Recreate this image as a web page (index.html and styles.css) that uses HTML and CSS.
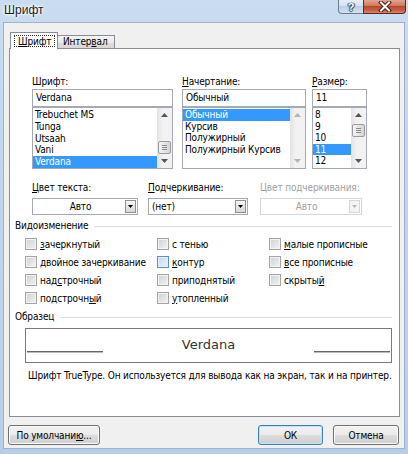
FILE: index.html
```html
<!DOCTYPE html>
<html lang="ru">
<head>
<meta charset="utf-8">
<title>Шрифт</title>
<link rel="stylesheet" href="styles.css">
</head>
<body>
<div class="window">
  <div class="titlebar">
    <span class="title">Шрифт</span>
    <div class="caption-btns">
      <div class="cbtn help"><span class="qmark">?</span></div>
      <div class="cbtn close">
        <svg width="14" height="11" viewBox="0 0 14 11">
          <path d="M3 1.5 L11 9.5 M11 1.5 L3 9.5" stroke="#4a2018" stroke-width="4" stroke-linecap="square" fill="none"/>
          <path d="M3 1.5 L11 9.5 M11 1.5 L3 9.5" stroke="#ffffff" stroke-width="2" stroke-linecap="square" fill="none"/>
        </svg>
      </div>
    </div>
  </div>
  <div class="client">
    <div class="tabs">
      <div class="tab active"><span class="focus"><u>Ш</u>рифт</span></div>
      <div class="tab">Интер<u>в</u>ал</div>
    </div>
    <div class="panel">
      <div class="fontgrid">
        <div class="field f-font">
          <div class="lbl">Шрифт:</div>
          <div class="input">Verdana</div>
          <div class="list">
            <div class="items">
              <div class="item font-item">Trebuchet MS</div>
              <div class="item font-item">Tunga</div>
              <div class="item font-item">Utsaah</div>
              <div class="item font-item">Vani</div>
              <div class="item font-item sel">Verdana</div>
            </div>
            <div class="sbar">
              <div class="arrow"><svg width="7" height="4" viewBox="0 0 7 4"><path d="M0 4 L3.5 0 L7 4 Z" fill="#555"/></svg></div>
              <div class="track"></div>
              <div class="thumb"><i></i><i></i><i></i></div>
              <div class="arrow"><svg width="7" height="4" viewBox="0 0 7 4"><path d="M0 0 L7 0 L3.5 4 Z" fill="#555"/></svg></div>
            </div>
          </div>
        </div>
        <div class="field f-style">
          <div class="lbl"><u>Н</u>ачертание:</div>
          <div class="input">Обычный</div>
          <div class="list">
            <div class="items">
              <div class="item sel">Обычный</div>
              <div class="item">Курсив</div>
              <div class="item">Полужирный</div>
              <div class="item">Полужирный Курсив</div>
            </div>
            <div class="sbar">
              <div class="arrow"><svg width="7" height="4" viewBox="0 0 7 4"><path d="M0 4 L3.5 0 L7 4 Z" fill="#b4b4b4"/></svg></div>
              <div class="track"></div>
              <div class="arrow"><svg width="7" height="4" viewBox="0 0 7 4"><path d="M0 0 L7 0 L3.5 4 Z" fill="#b4b4b4"/></svg></div>
            </div>
          </div>
        </div>
        <div class="field f-size">
          <div class="lbl"><u>Р</u>азмер:</div>
          <div class="input">11</div>
          <div class="list">
            <div class="items">
              <div class="item">8</div>
              <div class="item">9</div>
              <div class="item">10</div>
              <div class="item sel">11</div>
              <div class="item">12</div>
            </div>
            <div class="sbar">
              <div class="arrow"><svg width="7" height="4" viewBox="0 0 7 4"><path d="M0 4 L3.5 0 L7 4 Z" fill="#555"/></svg></div>
              <div class="thumb top"><i></i><i></i><i></i></div>
              <div class="track"></div>
              <div class="arrow"><svg width="7" height="4" viewBox="0 0 7 4"><path d="M0 0 L7 0 L3.5 4 Z" fill="#555"/></svg></div>
            </div>
          </div>
        </div>
      </div>

      <div class="combos">
        <div class="combo c1">
          <div class="lbl"><u>Ц</u>вет текста:</div>
          <div class="dropdown">
            <span class="dd-text center">Авто</span>
            <span class="dd-btn"><svg width="5" height="3" viewBox="0 0 5 3"><path d="M0 0 L5 0 L2.5 3 Z" fill="#000"/></svg></span>
          </div>
        </div>
        <div class="combo c2">
          <div class="lbl"><u>П</u>одчеркивание:</div>
          <div class="dropdown">
            <span class="dd-text">(нет)</span>
            <span class="dd-btn"><svg width="5" height="3" viewBox="0 0 5 3"><path d="M0 0 L5 0 L2.5 3 Z" fill="#000"/></svg></span>
          </div>
        </div>
        <div class="combo c3 disabled">
          <div class="lbl">Цвет подчеркивания:</div>
          <div class="dropdown">
            <span class="dd-text center">Авто</span>
            <span class="dd-btn"><svg width="5" height="3" viewBox="0 0 5 3"><path d="M0 0 L5 0 L2.5 3 Z" fill="#b8b8b8"/></svg></span>
          </div>
        </div>
      </div>

      <div class="group-title"><span>Видоизменение</span></div>
      <div class="checks">
        <label class="chk"><span class="box"></span><span><u>з</u>ачеркнутый</span></label>
        <label class="chk"><span class="box"></span><span>двойное зачеркивание</span></label>
        <label class="chk"><span class="box"></span><span>над<u>с</u>трочный</span></label>
        <label class="chk"><span class="box"></span><span>подстрочн<u>ы</u>й</span></label>
        <label class="chk"><span class="box"></span><span>с тенью</span></label>
        <label class="chk"><span class="box hover"></span><span><u>к</u>онтур</span></label>
        <label class="chk"><span class="box"></span><span>приподнятый</span></label>
        <label class="chk"><span class="box"></span><span><u>у</u>топленный</span></label>
        <label class="chk"><span class="box"></span><span><u>м</u>алые прописные</span></label>
        <label class="chk"><span class="box"></span><span><u>в</u>се прописные</span></label>
        <label class="chk"><span class="box"></span><span>скрыты<u>й</u></span></label>
      </div>

      <div class="group-title sample-title"><span>Образец</span></div>
      <div class="preview">
        <span class="pline"></span>
        <span class="ptext">Verdana</span>
        <span class="pline"></span>
      </div>
      <div class="desc">Шрифт TrueType. Он используется для вывода как на экран, так и на принтер.</div>
    </div>

    <div class="buttons">
      <button class="btn b-default">По умолчани<u>ю</u>...</button>
      <span class="spacer"></span>
      <button class="btn b-ok">ОК</button>
      <button class="btn b-cancel">Отмена</button>
    </div>
  </div>
</div>
</body>
</html>
```

FILE: styles.css
```css
* { box-sizing: border-box; }

html, body {
  margin: 0;
  padding: 0;
}

body {
  width: 408px;
  height: 454px;
  overflow: hidden;
  font-family: "DejaVu Sans Condensed", "DejaVu Sans", sans-serif;
  font-stretch: condensed;
  font-size: 10px;
  letter-spacing: -0.15px;
  color: #000;
  background: #bfd4ec;
}

u { text-decoration: underline; text-underline-offset: 1px; }

.window {
  width: 408px;
  height: 454px;
  display: flex;
  flex-direction: column;
  background: linear-gradient(180deg, #cadcf1 0%, #c2d7ee 30%, #b7cee8 100%);
}

/* title bar */
.titlebar {
  flex: none;
  height: 22px;
  display: flex;
  justify-content: space-between;
  align-items: flex-start;
  padding: 0 2px 0 4px;
}

.title {
  font-family: "Liberation Sans", sans-serif;
  font-size: 12px;
  letter-spacing: 0;
  line-height: 21px;
  color: #1b1b1b;
  text-shadow: 0 0 5px #fff, 0 0 3px #fff, 0 0 2px #fff;
}

.caption-btns {
  display: flex;
}

.cbtn {
  height: 14px;
  display: flex;
  align-items: center;
  justify-content: center;
  border: 1px solid #6d7d91;
  border-top: none;
}

.help {
  width: 25px;
  border-right: none;
  border-radius: 0 0 0 4px;
  background: linear-gradient(180deg, #e6eef8 0%, #d3e1f0 45%, #bccfe5 50%, #d2e2f3 100%);
}

.qmark {
  font-family: "Liberation Sans", sans-serif;
  font-weight: bold;
  font-size: 11px;
  line-height: 12px;
  color: #fff;
  text-shadow: 0 0 1px #2c3c50, 1px 0 1px #2c3c50, -1px 0 1px #2c3c50, 0 1px 1px #2c3c50;
}

.close {
  width: 43px;
  border-color: #5a2a20;
  border-radius: 0 0 4px 0;
  background: linear-gradient(180deg, #e0a594 0%, #cf7b63 42%, #b8492f 50%, #c86145 80%, #d9876a 100%);
}

/* client area */
.client {
  flex: none;
  height: 427px;
  margin: 0 3px;
  background: #f0f0f0;
  border: 1px solid #9fb2ca;
  padding: 9px 4px 3px 4px;
  display: flex;
  flex-direction: column;
}

.tabs {
  height: 17px;
  display: flex;
  align-items: flex-end;
  padding-left: 2px;
}

.tab {
  height: 14px;
  width: 57px;
  border: 1px solid #898c95;
  border-bottom: none;
  border-left: none;
  background: linear-gradient(180deg, #f3f3f3 0%, #ebebeb 50%, #dddddd 51%, #d7d7d7 100%);
  line-height: 12px;
  padding-left: 5px;
  color: #000;
}

.tab.active {
  position: relative;
  z-index: 1;
  width: 48px;
  height: 17px;
  border-left: 1px solid #898c95;
  background: #fff;
  padding: 2px 2px 0 3px;
}

.focus {
  display: block;
  height: 12px;
  line-height: 11px;
  border: 1px dotted #333;
  padding-left: 3px;
}

.panel {
  height: 369px;
  margin: -1px 0 0 1px;
  border: 1px solid #898c95;
  background: #fff;
  padding: 26px 7px 0 5px;
  display: flex;
  flex-direction: column;
}

/* font / style / size */
.fontgrid {
  display: flex;
  padding-left: 17px;
}

.f-font { width: 141px; }
.f-style { width: 124px; margin-left: 9px; }
.f-size { width: 55px; margin-left: 6px; }

.lbl {
  height: 14px;
  line-height: 13px;
  white-space: nowrap;
}

.input {
  height: 18px;
  border: 1px solid #a5a9b1;
  padding-left: 3px;
  line-height: 16px;
}

.list {
  height: 62px;
  border: 1px solid #a5a9b1;
  display: flex;
  overflow: hidden;
}

.items {
  flex: 1;
  min-width: 0;
  padding-top: 1px;
  overflow: hidden;
}

.item {
  height: 11.6px;
  line-height: 11.6px;
  padding-left: 2px;
  white-space: nowrap;
}

.item.font-item {
  height: 11.8px;
  line-height: 11.8px;
}

.item.sel {
  background: #3399ff;
  color: #fff;
}

.sbar {
  width: 15px;
  flex: none;
  display: flex;
  flex-direction: column;
  background: linear-gradient(90deg, #e3e3e6 0%, #f2f2f3 40%, #f2f2f3 100%);
}

.arrow {
  height: 14px;
  flex: none;
  display: flex;
  align-items: center;
  justify-content: center;
}

.track { flex: 1; }

.thumb {
  height: 13px;
  flex: none;
  margin: 0 1px;
  border: 1px solid #999ba0;
  border-radius: 2px;
  background: linear-gradient(90deg, #f4f4f4 0%, #e6e6e6 50%, #d4d4d4 100%);
  display: flex;
  flex-direction: column;
  justify-content: center;
  align-items: center;
  gap: 1px;
}

.thumb.top { margin-top: 2px; }

.thumb i {
  display: block;
  width: 5px;
  height: 1px;
  background: #8a8c90;
}

/* combos */
.combos {
  display: flex;
  padding-left: 17px;
  margin-top: 12px;
}

.combo .lbl { height: 17px; }
.c1 { width: 106px; }
.c2 { width: 100px; margin-left: 10px; }
.c3 { width: 102px; margin-left: 12px; }

.dropdown {
  height: 17px;
  border: 1px solid #a5a9b1;
  display: flex;
  align-items: center;
  background: #fff;
}

.dd-text {
  flex: 1;
  padding-left: 3px;
  line-height: 15px;
}

.dd-text.center {
  text-align: center;
}

.dd-btn {
  width: 11px;
  height: 13px;
  margin-right: 1px;
  border: 1px solid #8e9095;
  background: linear-gradient(180deg, #f6f6f6 0%, #e6e6e6 50%, #d6d6d6 100%);
  display: flex;
  align-items: center;
  justify-content: center;
}

.disabled .lbl,
.disabled .dd-text { color: #a0a0a0; }
.disabled .dropdown { border-color: #d3d6db; }
.disabled .dd-btn { border-color: #d3d6db; background: #f4f4f4; }

/* group titles */
.group-title {
  display: flex;
  align-items: center;
  height: 12px;
  line-height: 12px;
  margin-top: 5px;
}

.group-title::after {
  content: "";
  flex: 1;
  margin-left: 6px;
  border-top: 1px solid #d5dfe5;
}

.sample-title { margin-top: 4px; }

/* checkboxes */
.checks {
  display: grid;
  grid-template-columns: 132px 112px 1fr;
  grid-template-rows: repeat(4, 18px);
  grid-auto-flow: column;
  padding-left: 10px;
  margin-top: 3px;
}

.chk {
  display: flex;
  align-items: center;
  white-space: nowrap;
}

.box {
  width: 12px;
  height: 12px;
  margin-right: 3px;
  border: 1px solid #a2a4a7;
  background: linear-gradient(135deg, #cfd1d4 0%, #e2e3e5 55%, #f3f3f3 100%);
  box-shadow: inset 0 0 0 1px #f2f2f2;
  flex: none;
}

.box.hover {
  border-color: #5b8fc7;
  background: linear-gradient(135deg, #b8d6f3 0%, #d8e9f8 55%, #eef5fc 100%);
  box-shadow: inset 0 0 0 1px #e7f1fb;
}

/* sample */
.preview {
  margin: 5px 0 0 10px;
  width: 367px;
  height: 35px;
  border: 1px solid #7a7a7a;
  display: grid;
  grid-template-columns: 76px 1fr 76px;
  align-items: end;
  padding: 0 1px 9px 1px;
}

.pline {
  height: 2px;
  border-top: 1px solid #666;
  border-bottom: 1px solid #bcbcbc;
}

.ptext {
  font-family: "DejaVu Sans", sans-serif;
  font-stretch: normal;
  font-size: 13px;
  letter-spacing: 0;
  line-height: 16px;
  text-align: center;
  color: #333;
}

.desc {
  margin-top: 7px;
  padding-left: 13px;
  line-height: 12px;
  white-space: nowrap;
}

/* buttons */
.buttons {
  display: flex;
  height: 20px;
  margin: 8px 1px 0 0;
}

.spacer { flex: 1; }

.btn {
  height: 20px;
  padding: 0;
  font: inherit;
  font-stretch: condensed;
  letter-spacing: -0.15px;
  color: #000;
  border: 1px solid #707070;
  border-radius: 3px;
  background: linear-gradient(180deg, #f2f2f2 0%, #ebebeb 50%, #dddddd 51%, #cfcfcf 100%);
  box-shadow: inset 0 0 0 1px #fbfbfb;
}

.b-default { width: 92px; }
.b-ok {
  width: 65px;
  border-color: #3c7fb1;
  box-shadow: inset 0 0 0 1px #bfe4f8;
}
.b-cancel { width: 66px; margin-left: 10px; }
```
